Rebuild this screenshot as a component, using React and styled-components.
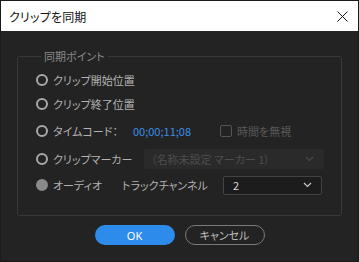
import React from "react";
import styled, { createGlobalStyle } from "styled-components";

const Global = createGlobalStyle`
  html, body { margin: 0; padding: 0; background: #232323; }
  body {
    font-family: "Noto Sans CJK JP", "Noto Sans", sans-serif;
    font-feature-settings: "palt";
  }
`;

const Window = styled.div`
  width: 359px;
  height: 262px;
  box-sizing: border-box;
  border: 1px solid #1a1a1a;
  background: #232323;
  display: flex;
  flex-direction: column;
  overflow: hidden;
`;

const TitleBar = styled.div`
  height: 30px;
  background: #ffffff;
  display: flex;
  align-items: center;
  justify-content: space-between;
  padding: 0 10px 0 8px;
  flex-shrink: 0;
`;

const Title = styled.div`
  font-size: 12px;
  color: #111;
  letter-spacing: 0.2px;
`;

const Body = styled.div`
  display: flex;
  flex-direction: column;
  padding: 17px 16px 0 16px;
`;

const Group = styled.fieldset`
  margin: 0;
  border: 1px solid #393939;
  border-radius: 2px;
  padding: 4px 17px 17px 18px;
`;

const Legend = styled.legend`
  font-size: 11px;
  color: #8a8a8a;
  padding: 0 3px;
  margin-left: 5px;
`;

const Row = styled.div`
  height: ${(p) => p.h}px;
  display: flex;
  align-items: center;
`;

const Radio = styled.span`
  width: 12px;
  height: 12px;
  box-sizing: border-box;
  border-radius: 50%;
  border: 2px solid ${(p) => (p.filled ? "#8a8a8a" : "#a8a8a8")};
  background: ${(p) => (p.filled ? "#8a8a8a" : "transparent")};
  margin-right: 5px;
  flex-shrink: 0;
`;

const Label = styled.span`
  font-size: 11px;
  color: ${(p) => (p.dim ? "#5a5a5a" : "#b2b2b2")};
  width: ${(p) => (p.w ? `${p.w}px` : "auto")};
  flex-shrink: 0;
  white-space: nowrap;
`;

const Timecode = styled.span`
  font-size: 11px;
  color: #3a8ee6;
  width: 87px;
  flex-shrink: 0;
`;

const Check = styled.span`
  width: 12px;
  height: 12px;
  box-sizing: border-box;
  border: 1px solid #555;
  border-radius: 2px;
  margin-right: 5px;
`;

const Select = styled.div`
  width: ${(p) => p.w}px;
  height: ${(p) => p.h}px;
  box-sizing: border-box;
  display: flex;
  align-items: center;
  justify-content: space-between;
  padding: 0 9px 0 ${(p) => p.pl}px;
  background: ${(p) => (p.disabled ? "#2a2a2a" : "#1c1c1c")};
  border: 1px solid ${(p) => (p.disabled ? "#2a2a2a" : "#444")};
  border-radius: 2px;
  font-size: 11px;
  color: ${(p) => (p.disabled ? "#4e4e4e" : "#d8d8d8")};
`;

const Buttons = styled.div`
  display: flex;
  justify-content: center;
  gap: 10px;
  margin-top: 9px;
`;

const Button = styled.div`
  width: 80px;
  height: 20px;
  box-sizing: border-box;
  border-radius: 10px;
  display: flex;
  align-items: center;
  justify-content: center;
  font-size: 11px;
  background: ${(p) => (p.primary ? "#2d8ceb" : "transparent")};
  border: ${(p) => (p.primary ? "none" : "1px solid #7a7a7a")};
  color: ${(p) => (p.primary ? "#ffffff" : "#bdbdbd")};
  font-family: "Noto Sans", "Noto Sans CJK JP", sans-serif;
`;

const Chevron = ({ color }) => (
  <svg width="9" height="6" viewBox="0 0 9 6">
    <path d="M1 1 L4.5 4.5 L8 1" fill="none" stroke={color} strokeWidth="1.2" />
  </svg>
);

export default function App() {
  return (
    <>
      <Global />
      <Window>
        <TitleBar>
          <Title>クリップを同期</Title>
          <svg width="11" height="11" viewBox="0 0 11 11">
            <path d="M0.5 0.5 L10.5 10.5 M10.5 0.5 L0.5 10.5" stroke="#111" strokeWidth="1" />
          </svg>
        </TitleBar>
        <Body>
          <Group>
            <Legend>同期ポイント</Legend>
            <Row h={24}>
              <Radio />
              <Label>クリップ開始位置</Label>
            </Row>
            <Row h={24}>
              <Radio />
              <Label>クリップ終了位置</Label>
            </Row>
            <Row h={30}>
              <Radio />
              <Label w={80}>タイムコード：</Label>
              <Timecode>00;00;11;08</Timecode>
              <Check />
              <Label dim>時間を無視</Label>
            </Row>
            <Row h={26}>
              <Radio />
              <Label w={91}>クリップマーカー</Label>
              <Select disabled w={180} h={20} pl={6}>
                <span>（名称未設定 マーカー 1）</span>
                <Chevron color="#4a4a4a" />
              </Select>
            </Row>
            <Row h={26}>
              <Radio filled />
              <Label w={69}>オーディオ</Label>
              <Label w={101}>トラックチャンネル</Label>
              <Select w={99} h={19} pl={9}>
                <span>2</span>
                <Chevron color="#c8c8c8" />
              </Select>
            </Row>
          </Group>
          <Buttons>
            <Button primary>OK</Button>
            <Button>キャンセル</Button>
          </Buttons>
        </Body>
      </Window>
    </>
  );
}
